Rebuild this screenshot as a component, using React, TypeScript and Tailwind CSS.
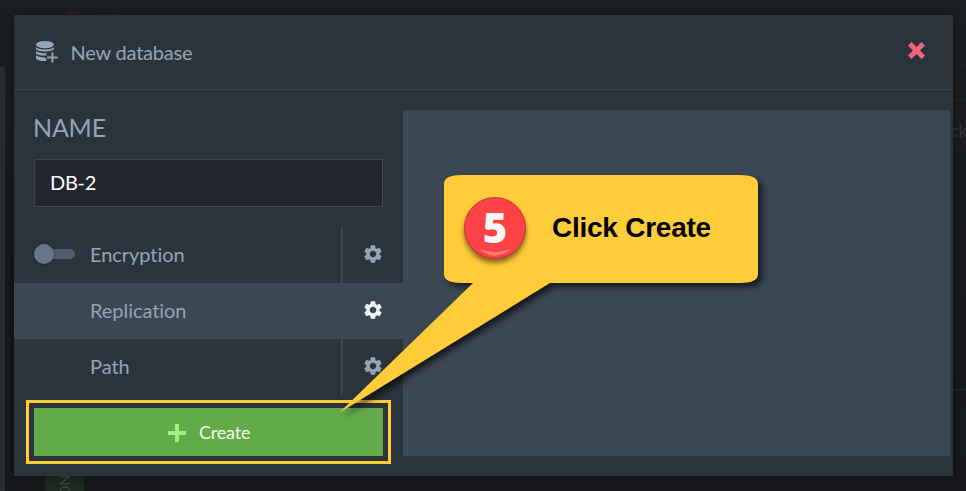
import type { ReactNode } from "react";
import { MdSettings } from "react-icons/md";

function Gear({ active = false }: { active?: boolean }) {
  return <MdSettings className={`mb-[2px] h-[22px] w-[22px] ${active ? "text-[#f2f5f8]" : "text-[#94a3b5]"}`} />;
}

function DatabaseAdd() {
  return (
    <svg viewBox="0 0 22 22" className="h-[22px] w-[22px] text-[#94a5b7]" fill="currentColor">
      <ellipse cx="9" cy="3.600" rx="9" ry="3.600" />
      <path d="M0 6.200c3.500 3 14.500 3 18 0v2.100c-1.700 1.500-4.500 2-7 2.100C6.300 10.700 1.700 10.200 0 8.300z" />
      <path d="M0 10.100c2.400 1.800 6.500 2.300 10.300 2v2.400C6.200 14.800 1.500 14.300 0 12.500z" />
      <path d="M0 14.200c2 1.500 5.300 2.200 9 2.100v.700l1.300.200V20C6.200 20.300 1 19.600 0 17.500z" />
      <path d="M15.400 11.500h2v4h4.300v2h-4.300v4h-2v-4h-4.300v-2h4.300z" />
    </svg>
  );
}

function SettingRow({ label, selected, children }: { label: string; selected?: boolean; children?: ReactNode }) {
  return (
    <div className={`flex h-14 items-center ${selected ? "bg-[#3c4754]" : ""}`}>
      <div className="mb-0.5 w-[76px] pl-5">{children}</div>
      <span className="mb-0.5 w-[251px] text-[20px] leading-[24px] tracking-[-0.05px] text-[#94a5b7]">{label}</span>
      <div className={`flex h-full w-[62px] items-center border-l-2 pl-[19px] ${selected ? "border-transparent" : "border-[#3c4754]"}`}>
        <Gear active={selected} />
      </div>
    </div>
  );
}

function Backdrop() {
  return (
    <div className="absolute inset-0 flex overflow-hidden bg-[#191b1f]">
      <div className="flex w-[5px] flex-col">
        <div className="h-[67px] bg-[#1c1f22]" />
        <div className="flex-1 bg-[#2a2d32]" />
      </div>
      <div className="flex-1 bg-linear-to-b from-[#1c2023] via-[#181a1d] to-[#17181c]">
        <div className="h-[66px] border-b border-[#1f2225]" />
      </div>
      <div className="absolute left-[45px] top-0 h-[15px] w-px bg-[#202326]" />
      <div className="absolute left-[65px] top-[11px] h-3 w-4 rounded bg-[#3b1a2b]" />
      <span className="absolute left-[98px] top-[9px] text-[20px] font-bold leading-[24px] text-[#292d32]">DB1</span>
      <div className="absolute left-[45px] top-[476px] flex h-[15px] w-[39px] items-end justify-center overflow-hidden bg-[#1e2b20]">
        <span className="-mb-[6px] rotate-180 text-[14px] leading-[15px] text-[#414b48] [writing-mode:vertical-rl]">ONLINE</span>
      </div>
      <div className="absolute left-[953px] top-[44px] h-px w-[13px] bg-[#202225]" />
      <div className="absolute left-[953px] top-[66px] h-px w-[13px] bg-[#202225]" />
      <div className="absolute left-[953px] top-[100px] h-px w-[13px] bg-[#26272d]" />
      <div className="absolute left-[953px] top-[106px] h-[47px] w-[13px] bg-[#1c1e22]">
        <span className="absolute -left-[3px] top-[12px] text-[18px] leading-[24px] text-[#34373b]">ck</span>
      </div>
      <div className="absolute left-[953px] top-[389px] h-px w-[13px] bg-[#273029]" />
      <div className="absolute left-[960px] top-[408px] h-[48px] w-[6px] bg-[#1c1f22]" />
    </div>
  );
}

function Callout() {
  return (
    <div className="absolute left-[339px] top-[175px] h-[238px] w-[419px]">
      <svg viewBox="0 0 419 238" className="absolute inset-0 h-full w-full overflow-visible drop-shadow-[4px_4px_3px_rgba(0,0,0,0.65)]">
        <path
          fill="#ffcd3a"
          d="M123 0H401Q419 0 419 9V99Q419 108 401 108H211L0 238L134 108H123Q105 108 105 99V9Q105 0 123 0Z"
        />
      </svg>
      <div className="relative ml-[105px] flex h-[106px] items-center pl-5">
        <div className="relative flex h-[62px] w-[62px] items-center justify-center rounded-full border border-[#ba3940] bg-[#fe4245] shadow-[0_4px_5px_rgba(60,30,0,0.6)]">
          <span className="mb-[3px] font-['Open_Sans',sans-serif] text-[42px] font-extrabold leading-[60px] text-[#f8f8f8]">5</span>
          <svg viewBox="0 0 32 8" className="absolute left-[14px] top-[51px] h-2 w-8">
            <path d="M0 0Q16 6 32 0Q16 13 0 0Z" fill="#ff7b78" />
          </svg>
        </div>
        <span className="ml-[26px] whitespace-nowrap font-['Liberation_Sans',Arial,sans-serif] text-[28px] font-bold leading-8 tracking-[-0.25px] text-black">
          Click Create
        </span>
      </div>
    </div>
  );
}

export default function App() {
  return (
    <div className="relative h-[491px] w-[966px] overflow-hidden font-['Lato',sans-serif]">
      <Backdrop />
      <div className="absolute left-[14px] top-[15px] flex h-[461px] w-[939px] flex-col bg-[#2c343b] shadow-[0_0_12px_rgba(0,0,0,0.5)]">
        <header className="flex h-[75px] items-center justify-between border-b border-[#3c4754] pl-[22px] pr-7">
          <div className="flex items-center gap-[12.5px]">
            <DatabaseAdd />
            <h1 className="text-[20px] leading-6 tracking-[-0.2px] text-[#94a5b7]">New database</h1>
          </div>
          <button className="mb-[3px]" aria-label="Close">
            <svg viewBox="0 0 17 17" className="h-[17px] w-[17px]">
              <path d="M3.500 0L8.500 5L13.500 0L17 3.500L12 8.500L17 13.500L13.500 17L8.500 12L3.500 17L0 13.500L5 8.500L0 3.500Z" fill="#f2647e" />
            </svg>
          </button>
        </header>
        <div className="flex flex-1">
          <section className="flex w-[389px] flex-col">
            <h2 className="mt-[21px] pl-[19px] text-[25px] leading-[32px] tracking-[-0.2px] text-[#94a5b7]">NAME</h2>
            <input
              className="mx-5 mb-5 mt-4 h-12 border border-[#3c4754] bg-[#23262e] pl-[15px] pr-4 pb-0.5 text-[20px] tracking-[-0.3px] text-white outline-none"
              defaultValue="DB-2"
            />
            <SettingRow label="Encryption">
              <div className="flex h-5 w-[41px] items-center">
                <div className="z-10 h-5 w-5 shrink-0 rounded-full bg-[#68758c] shadow-[0_1px_3px_rgba(0,0,0,0.3)]" />
                <div className="-ml-[10px] h-[10px] flex-1 rounded-full bg-[#505c6e]" />
              </div>
            </SettingRow>
            <SettingRow label="Replication" selected />
            <SettingRow label="Path" />
            <div className="ml-3 mt-[5px] h-16 w-[365px] border-[3px] border-[#ffcd3a] p-[5px]">
              <button className="flex h-12 w-[349px] items-center bg-[#61ac49] pl-[134px]">
                <svg viewBox="0 0 18 18" className="mt-px h-[18px] w-[18px]">
                  <path d="M7 0h4v7h7v4h-7v7H7v-7H0V7h7z" fill="#9ff280" />
                </svg>
                <span className="ml-[13px] text-[18px] leading-6 tracking-[-0.2px] text-[#f3faf1]">Create</span>
              </button>
            </div>
          </section>
          <aside className="mb-5 mr-[3px] mt-5 flex-1 bg-[#3c4754]" />
        </div>
      </div>
      <Callout />
    </div>
  );
}
